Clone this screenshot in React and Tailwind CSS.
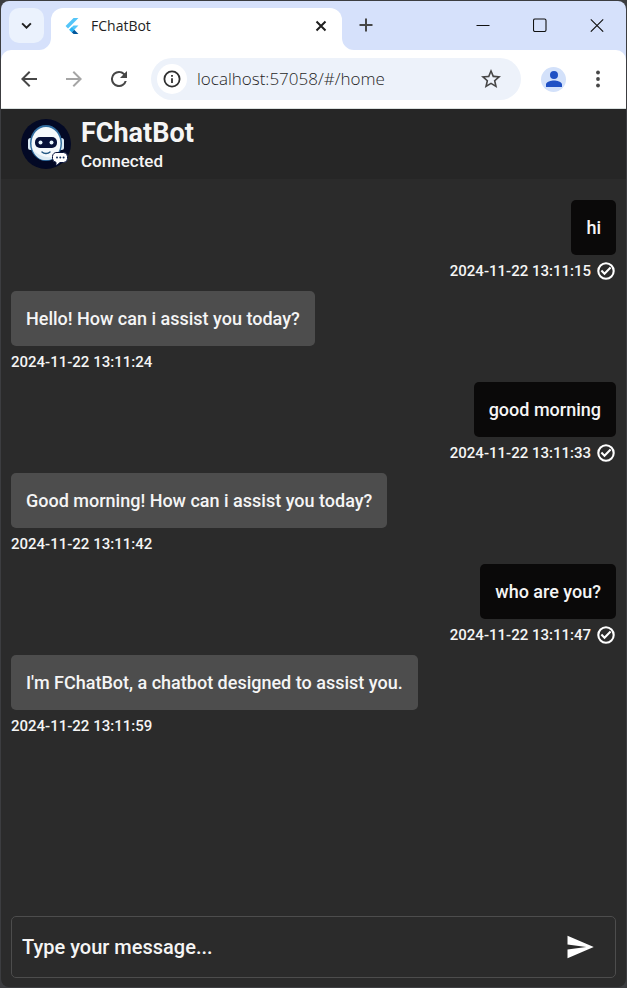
import React from "react";

const messages = [
  { id: 1, mine: true, text: "hi", time: "2024-11-22 13:11:15" },
  { id: 2, mine: false, text: "Hello! How can i assist you today?", time: "2024-11-22 13:11:24" },
  { id: 3, mine: true, text: "good morning", time: "2024-11-22 13:11:33" },
  { id: 4, mine: false, text: "Good morning! How can i assist you today?", time: "2024-11-22 13:11:42" },
  { id: 5, mine: true, text: "who are you?", time: "2024-11-22 13:11:47" },
  { id: 6, mine: false, text: "I'm FChatBot, a chatbot designed to assist you.", time: "2024-11-22 13:11:59" },
];

function FlutterLogo() {
  return (
    <svg viewBox="0 0 24 24" className="size-4 shrink-0" aria-hidden="true">
      <path fill="#54c5f8" d="M14.3 0 2.3 12 6 15.7 21.7 0z" />
      <path fill="#54c5f8" d="M14.3 11.1 7.9 17.5 11.6 21.2 21.7 11.1z" />
      <path fill="#01579b" d="M11.6 21.2 14.4 24h7.3l-6.4-6.5z" />
      <path fill="#29b6f6" d="m7.9 17.5 3.7-3.7 3.7 3.7-3.7 3.7z" />
    </svg>
  );
}

function Flare({ className }) {
  return (
    <svg viewBox="0 0 12 12" className={className} aria-hidden="true">
      <path fill="#fff" d="M12 0v12H0A12 12 0 0 0 12 0z" />
    </svg>
  );
}

function BotAvatar() {
  return (
    <svg viewBox="0 0 50 50" className="size-[50px] shrink-0" role="img" aria-label="FChatBot avatar">
      <circle cx="25" cy="25" r="25" fill="#030925" />
      <rect x="7" y="19" width="5" height="12" rx="2.5" fill="#dcecf5" />
      <rect x="38" y="19" width="5" height="12" rx="2.5" fill="#dcecf5" />
      <ellipse cx="25" cy="24" rx="16" ry="18" fill="#326ea0" />
      <ellipse cx="25" cy="24.5" rx="14.5" ry="16.5" fill="#f4f9fc" />
      <path d="M12 31c3 7 7 10 13 10 4 0 7-1 9-3-6 1-15 0-22-7z" fill="#dcebf4" />
      <rect x="14" y="18" width="22" height="11" rx="5" fill="#061139" />
      <circle cx="19.5" cy="23.5" r="2" fill="#e8f7ff" />
      <circle cx="30.5" cy="23.5" r="2" fill="#e8f7ff" />
      <path d="M21 33c2 2 6 2 8 0" fill="none" stroke="#245984" strokeWidth="1.5" strokeLinecap="round" />
      <path
        d="M36 33.500h6.500a4 4 0 0 1 4 4v2a4 4 0 0 1-4 4H39l-4 3.500v-3.700a4 4 0 0 1-3.500-3.800v-2a4 4 0 0 1 4.500-4z"
        fill="#fff"
        stroke="#061139"
        strokeWidth="1"
      />
      <circle cx="36" cy="38.500" r="1" fill="#17325c" />
      <circle cx="39.300" cy="38.500" r="1" fill="#17325c" />
      <circle cx="42.600" cy="38.500" r="1" fill="#17325c" />
    </svg>
  );
}

function CheckCircle() {
  return (
    <svg viewBox="0 0 24 24" className="size-5" fill="#fff" role="img" aria-label="Sent">
      <path d="M12 1.500a10.500 10.500 0 1 0 0 21 10.500 10.500 0 0 0 0-21zm0 18.500a8 8 0 1 1 0-16 8 8 0 0 1 0 16z" />
      <path d="m16.600 7-6.400 6.400-2.800-2.800-1.800 1.800 4.600 4.600 8.200-8.200z" />
    </svg>
  );
}

function TabStrip() {
  return (
    <div className="flex h-[49px] items-start bg-[#d6e1fb] pl-2 pt-[7px]">
      <button aria-label="Search tabs" className="flex size-[35px] shrink-0 items-center justify-center rounded-[10px] bg-[#ebf2fd]">
        <svg viewBox="0 0 12 8" className="h-[7px] w-[11px]" fill="none" stroke="#1f1f1f" strokeWidth="2.200">
          <path d="m1 1.500 5 5 5-5" />
        </svg>
      </button>
      <div className="relative ml-[7px] flex h-[42px] w-[291px] items-center rounded-t-[12px] bg-white pb-[6px] pl-[13px] pr-[15px]">
        <Flare className="absolute -left-3 bottom-0 size-3" />
        <FlutterLogo />
        <span className="ml-[11px] flex-1 font-['Open_Sans',sans-serif] text-sm font-normal text-[#1f1f1f]">FChatBot</span>
        <button aria-label="Close tab">
          <svg viewBox="0 0 12 12" className="size-3" stroke="#1f1f1f" strokeWidth="2">
            <path d="m1.500 1.500 9 9m0-9-9 9" />
          </svg>
        </button>
        <Flare className="absolute -right-3 bottom-0 size-3 -scale-x-100" />
      </div>
      <button aria-label="New tab" className="ml-[17px] mt-[10px]">
        <svg viewBox="0 0 14 14" className="size-[14px]" stroke="#474747" strokeWidth="2">
          <path d="M7 .5v13M.5 7h13" />
        </svg>
      </button>
      <div className="ml-auto mt-[10px] flex gap-[43px] pr-[22px]">
        <button aria-label="Minimize">
          <svg viewBox="0 0 14 14" className="size-[14px]" stroke="#111">
            <path d="M.5 7.500h13" />
          </svg>
        </button>
        <button aria-label="Maximize">
          <svg viewBox="0 0 14 14" className="size-[14px]" fill="none" stroke="#111" strokeWidth="1.100">
            <rect x=".5" y="1" width="12.500" height="12.500" rx="1.500" />
          </svg>
        </button>
        <button aria-label="Close window">
          <svg viewBox="0 0 14 14" className="size-[14px]" stroke="#111" strokeWidth="1.100">
            <path d="m.8 1.300 12.400 12.400m0-12.400L.8 13.700" />
          </svg>
        </button>
      </div>
    </div>
  );
}

function Toolbar() {
  return (
    <div className="bg-[#d6e1fb]">
      <div className="flex h-[59px] items-center rounded-t-[10px] border-b border-[#d9e0df] bg-white px-[18px]">
        <button aria-label="Back">
          <svg viewBox="4 4 16 16" className="size-5 p-[2px]" fill="#474747">
            <path d="M20 11H7.830l5.590-5.590L12 4l-8 8 8 8 1.410-1.410L7.830 13H20z" />
          </svg>
        </button>
        <button aria-label="Forward" className="ml-[25px]" disabled>
          <svg viewBox="4 4 16 16" className="size-5 p-[2px]" fill="#a5a5a5">
            <path d="m12 4-1.410 1.410L16.170 11H4v2h12.170l-5.580 5.590L12 20l8-8z" />
          </svg>
        </button>
        <button aria-label="Reload" className="ml-[25px]">
          <svg viewBox="4 4 16 16" className="size-5 p-[2px]" fill="#474747">
            <path d="M17.650 6.350A7.958 7.958 0 0 0 12 4a8 8 0 1 0 7.730 10h-2.080A6 6 0 1 1 12 6c1.660 0 3.140.69 4.220 1.780L13 11h7V4z" />
          </svg>
        </button>
        <div className="ml-[22px] flex h-[42px] min-w-0 flex-1 items-center rounded-full bg-[#edf2fa] pl-[6px] pr-5">
          <button aria-label="Site information" className="flex size-[30px] shrink-0 items-center justify-center rounded-full bg-white">
            <svg viewBox="0 0 18 18" className="size-[18px]" fill="none" stroke="#303030" strokeWidth="1.800">
              <circle cx="9" cy="9" r="7.600" />
              <path d="M9 8.200V13M9 5v1.800" />
            </svg>
          </button>
          <input
            aria-label="Address"
            defaultValue="localhost:57058/#/home"
            className="ml-[10px] min-w-0 flex-1 bg-transparent font-['Open_Sans',sans-serif] text-[17px] font-light text-[#1f1f1f] outline-none"
          />
          <button aria-label="Bookmark this page">
            <svg viewBox="2 2 20 20" className="size-5" fill="#474747">
              <path d="m22 9.240-7.190-.62L12 2 9.190 8.630 2 9.240l5.460 4.730L5.820 21 12 17.270 18.180 21l-1.630-7.030zM12 15.400l-3.760 2.270 1-4.280-3.320-2.880 4.380-.38L12 6.100l1.710 4.040 4.380.38-3.320 2.880 1 4.280z" />
            </svg>
          </button>
        </div>
        <button aria-label="Profile" className="ml-5 flex size-[25px] shrink-0 items-center justify-center rounded-full bg-[#d3e1fa]">
          <svg viewBox="4 4 16 16" className="size-4" fill="#1f50c4">
            <path d="M12 12a4 4 0 1 0 0-8 4 4 0 0 0 0 8zm0 1.500c-2.700 0-8 1.300-8 4V20h16v-2.500c0-2.700-5.300-4-8-4z" />
          </svg>
        </button>
        <button aria-label="Browser menu" className="ml-[22px]">
          <svg viewBox="0 0 20 20" className="size-5" fill="#474747">
            <circle cx="10" cy="3.500" r="1.900" />
            <circle cx="10" cy="10" r="1.900" />
            <circle cx="10" cy="16.500" r="1.900" />
          </svg>
        </button>
      </div>
    </div>
  );
}

function Message({ message }) {
  return (
    <li className={message.mine ? "flex flex-col items-end" : "flex flex-col items-start"}>
      <p
        className={
          message.mine
            ? "rounded-[5px] bg-[#0a0909] p-[15px] text-lg leading-[25px]"
            : "rounded-[5px] bg-[#4d4d4d] p-[15px] text-lg leading-[25px]"
        }
      >
        {message.text}
      </p>
      <div className="flex h-8 items-center gap-[5px] text-[15px]">
        <time>{message.time}</time>
        {message.mine && <CheckCircle />}
      </div>
    </li>
  );
}

export default function App() {
  return (
    <div className="h-screen bg-[#3c3d40] p-px">
      <div className="flex h-full flex-col overflow-hidden rounded-[8px] bg-[#2b2b2b] font-[Roboto,sans-serif] font-medium text-[#f5f5f5]">
        <TabStrip />
        <Toolbar />
        <header className="flex h-[70px] shrink-0 items-center gap-[10px] bg-[#262626] px-5">
          <BotAvatar />
          <div className="pt-[2px]">
            <h1 className="text-[27px] font-bold leading-8">FChatBot</h1>
            <p className="text-[17px] leading-6">Connected</p>
          </div>
        </header>
        <main className="min-h-0 flex-1 overflow-hidden px-[10px] pt-[21px]">
          <ul className="flex flex-col gap-1">
            {messages.map((m) => (
              <Message key={m.id} message={m} />
            ))}
          </ul>
        </main>
        <form className="mx-[10px] mb-[9px] flex h-[62px] shrink-0 items-center rounded-[5px] border border-[#4d4d4d] pl-[10px] pr-5" onSubmit={(e) => e.preventDefault()}>
          <input
            aria-label="Message"
            placeholder="Type your message..."
            className="min-w-0 flex-1 bg-transparent text-xl outline-none placeholder:text-[#f5f5f5]"
          />
          <button aria-label="Send message">
            <svg viewBox="0 0 24 24" className="size-[30px]" fill="#fff">
              <path d="M2.010 21 23 12 2.010 3 2 10l15 2-15 2z" />
            </svg>
          </button>
        </form>
      </div>
    </div>
  );
}
